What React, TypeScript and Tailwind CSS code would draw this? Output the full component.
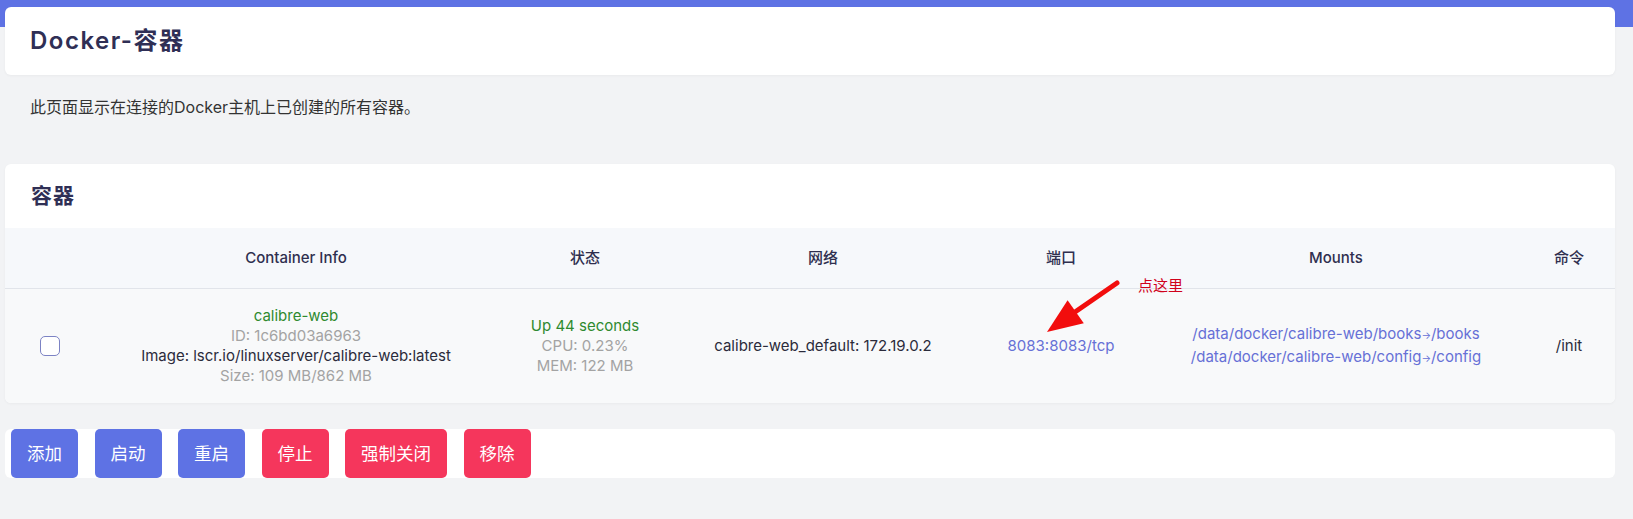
import React from 'react';

const cols = 'grid grid-cols-[90px_402px_176px_300px_176px_374px_1fr]';

const ActionButton: React.FC<{ label: string; tone: 'primary' | 'danger' }> = ({ label, tone }) => (
  <button
    className={
      'h-[49px] rounded-[5px] px-[16px] text-[17.5px] leading-none text-white ' +
      (tone === 'primary' ? 'bg-[#5e72e4]' : 'bg-[#f5365c]')
    }
  >
    {label}
  </button>
);

const Mount: React.FC<{ from: string; to: string }> = ({ from, to }) => (
  <div>
    {from}
    <span className="text-[10px]">→</span>
    {to}
  </div>
);

export default function App() {
  return (
    <div className="min-h-screen bg-[linear-gradient(to_bottom,#5e72e4_27px,#f2f3f5_27px)] pt-[7px] pl-[5px] pr-[18px] font-['Inter','Noto_Sans_CJK_SC',sans-serif] text-[#32325d]">
      {/* page title */}
      <div className="flex h-[68px] items-center rounded-md bg-white px-[25px] shadow-[0_1px_3px_rgba(0,0,0,0.04)]">
        <h1 className="text-[24px] font-semibold tracking-[1.5px] text-[#2f2f55]">Docker-容器</h1>
      </div>

      <p className="mt-[20px] px-[25px] text-[16px] leading-[24px] text-[#333]">
        此页面显示在连接的Docker主机上已创建的所有容器。
      </p>

      {/* containers card */}
      <div className="relative mt-[45px] overflow-hidden rounded-md bg-white shadow-[0_1px_3px_rgba(0,0,0,0.04)]">
        <div className="flex h-[64px] items-center px-[26px]">
          <h2 className="text-[21px] font-bold tracking-[1px] text-[#2f2f55]">容器</h2>
        </div>

        <div className={`${cols} h-[61px] items-center border-b border-[#e1e4ea] bg-[#f6f8fb] text-center text-[15px] font-medium text-[#2f2f4f]`}>
          <div />
          <div>Container Info</div>
          <div>状态</div>
          <div>网络</div>
          <div>端口</div>
          <div>Mounts</div>
          <div>命令</div>
        </div>

        <div className={`${cols} h-[114px] items-center bg-[#f8f9fa] text-center text-[15px] leading-[20px]`}>
          <div className="flex justify-center">
            <span className="block h-[20px] w-[20px] rounded-[5px] border border-[#7c83c4] bg-white" />
          </div>
          <div>
            <div className="text-[#2f8a2f]">calibre-web</div>
            <div className="text-[#a3a3a3]">ID: 1c6bd03a6963</div>
            <div className="text-[#2b2b3b]">Image: lscr.io/linuxserver/calibre-web:latest</div>
            <div className="text-[#a3a3a3]">Size: 109 MB/862 MB</div>
          </div>
          <div>
            <div className="text-[#2f8a2f]">Up 44 seconds</div>
            <div className="text-[#a3a3a3]">CPU: 0.23%</div>
            <div className="text-[#a3a3a3]">MEM: 122 MB</div>
          </div>
          <div className="text-[#2b2b3b]">calibre-web_default: 172.19.0.2</div>
          <div className="text-[#6670d6]">8083:8083/tcp</div>
          <div className="leading-[21px] text-[#6670d6]">
            <Mount from="/data/docker/calibre-web/books" to="/books" />
            <Mount from="/data/docker/calibre-web/config" to="/config" />
          </div>
          <div className="text-[#2b2b3b]">/init</div>
        </div>

        {/* annotation over the table */}
        <svg className="absolute left-[1030px] top-[111px]" width="90" height="65" viewBox="0 0 90 65">
          <line x1="82" y1="8" x2="40" y2="37" stroke="#f20d0d" strokeWidth="5" strokeLinecap="round" />
          <polygon points="12,57 32.6,25.3 48.8,48.3" fill="#f20d0d" />
        </svg>
        <span className="absolute left-[1133px] top-[111px] text-[15px] leading-[22px] text-[#d0021b]">点这里</span>
      </div>

      {/* actions */}
      <div className="mt-[26px] flex h-[49px] items-center gap-[16.5px] rounded-md bg-white pl-[6px]">
        <ActionButton label="添加" tone="primary" />
        <ActionButton label="启动" tone="primary" />
        <ActionButton label="重启" tone="primary" />
        <ActionButton label="停止" tone="danger" />
        <ActionButton label="强制关闭" tone="danger" />
        <ActionButton label="移除" tone="danger" />
      </div>
    </div>
  );
}
